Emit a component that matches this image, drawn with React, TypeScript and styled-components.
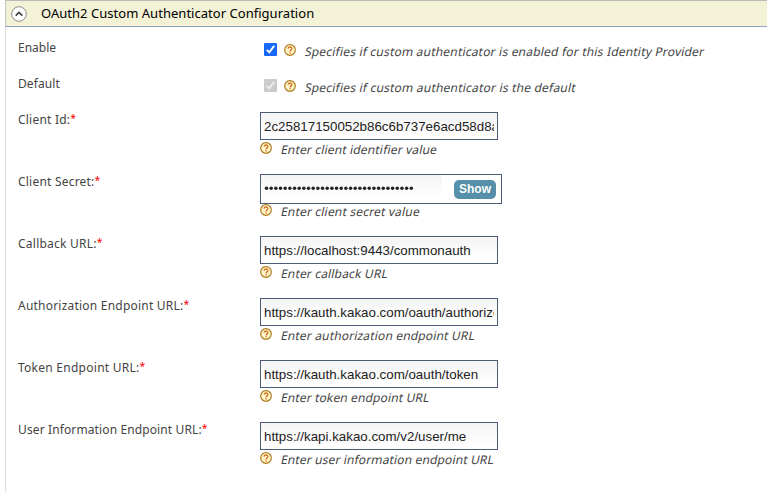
import React from "react";
import styled, { createGlobalStyle } from "styled-components";

const GlobalStyle = createGlobalStyle`
  * { box-sizing: border-box; }
  body {
    margin: 0;
    background: #fff;
    color: #444;
    font: 12px/16px "Noto Sans", "Open Sans", sans-serif;
    overflow: hidden;
  }
`;

const Panel = styled.section`
  height: 492px;
  margin-left: 5px;
  display: flex;
  flex-direction: column;
`;

const PanelHeader = styled.header`
  flex: none;
  height: 27px;
  display: flex;
  align-items: flex-start;
  gap: 14px;
  padding: 3px 0 0 5px;
  background: #f3f1d6;
  border-top: 1px solid #bbb;
  border-bottom: 1px solid #8fa3c4;
  border-left: 1px solid #c6c6c0;

  > svg { flex: none; margin-top: 2px; }
`;

const Title = styled.h2`
  margin: 0;
  font-size: 13px;
  line-height: 18px;
  font-weight: 400;
  letter-spacing: 0.03px;
  color: #000;
  white-space: nowrap;
`;

const PanelBody = styled.div`
  flex: 1;
  padding: 3px 0 0 12px;
  border-left: 1px solid #ddd;
`;

const Row = styled.div<{ $tall?: boolean }>`
  display: grid;
  grid-template-columns: 242px 1fr;
  height: ${(p) => (p.$tall ? 62 : 36)}px;
`;

const Label = styled.label<{ $tracking: number }>`
  padding-top: 10px;
  white-space: nowrap;
  letter-spacing: ${(p) => p.$tracking}px;
`;

const Required = styled.span`
  font-size: 10.5px;
  line-height: 1;
  vertical-align: 2px;
  color: #f00;
`;

const CheckLine = styled.div`
  display: flex;
  align-items: flex-start;
  padding: 13px 0 0 4px;
`;

const CheckBox = styled.span<{ $disabled?: boolean }>`
  display: block;
  width: 13px;
  height: 13px;
  border-radius: 1px;
  background: ${(p) => (p.$disabled ? "#cbcbcb" : "#1769f5")};
  color: ${(p) => (p.$disabled ? "#ececec" : "#fff")};
  margin-right: 7px;

  svg { display: block; }
`;

const Field = styled.div`
  padding-top: 10px;
`;

const InputSlot = styled.div`
  height: 30px;
`;

const TextInput = styled.input`
  display: block;
  width: 238px;
  height: 28px;
  padding: 1px 3px 0;
  border: 1px solid #4c5b77;
  border-radius: 0;
  outline: 0;
  color: #222;
  background: linear-gradient(#f4f4f4, #fff 90%);
  font: 13.333px "Liberation Sans", Arial, sans-serif;
`;

const SecretBox = styled.div`
  width: 242px;
  height: 30px;
  display: flex;
  align-items: flex-start;
  justify-content: space-between;
  padding: 0 5px 0 0;
  border: 1px solid #4c5b77;
`;

const SecretValue = styled.div`
  width: 181px;
  height: 26px;
  display: flex;
  align-items: center;
  padding: 0 0 0 3px;
  color: #222;
  background: linear-gradient(#f4f4f4, #fff 90%);

  svg { display: block; }
`;

const ShowButton = styled.button`
  width: 42px;
  height: 19px;
  margin-top: 5px;
  padding: 0 0 1px;
  border: 0;
  border-radius: 5px;
  color: #fff;
  background: #558fa9;
  font: bold 12px/18px "Liberation Sans", Arial, sans-serif;
`;

const HintLine = styled.div<{ $offset: number }>`
  display: flex;
  align-items: flex-start;
  gap: 8px;
  padding-top: ${(p) => p.$offset}px;

  > svg { flex: none; display: block; }
`;

const HintText = styled.span<{ $tracking: number }>`
  letter-spacing: ${(p) => p.$tracking}px;
  white-space: nowrap;
  transform: skewX(-12deg);
  transform-origin: 0 13px;
`;

const CollapseIcon = () => (
  <svg width="16" height="16" viewBox="0 0 16 16" fill="none">
    <circle cx="8" cy="8" r="7.3" fill="#fff" stroke="#8d8d8d" strokeWidth="1" />
    <path d="M4.7 9.6 8 6.4l3.3 3.2" stroke="#444" strokeWidth="1.8" />
  </svg>
);

const HelpIcon = () => (
  <svg width="12" height="12" viewBox="0 0 12 12" fill="none">
    <circle cx="6" cy="6" r="5.3" fill="#fff8cf" stroke="#ad7a1c" strokeWidth="1.2" />
    <path d="M4.1 4.8c0-2.4 3.8-2.3 3.8-.2C7.9 6 6.1 5.8 6.1 7.4" stroke="#d66c1b" strokeWidth="1.3" />
    <path d="M5.4 8.2h1.4v1.3H5.4z" fill="#d66c1b" />
  </svg>
);

const CheckMark = () => (
  <svg width="13" height="13" viewBox="0 0 13 13" fill="none">
    <path d="M2.8 6.9 5.3 9.3 10.2 2.9" stroke="currentColor" strokeWidth="1.9" />
  </svg>
);

const MaskDots = () => (
  <svg width="152" height="8" viewBox="0 0 152 8" fill="currentColor">
    {Array.from({ length: 32 }, (_, i) => (
      <circle key={i} cx={2.5 + i * 4.67} cy="4.2" r="1.75" />
    ))}
  </svg>
);

type Hinted = { text: string; tracking: number; offset?: number };

const Hint = ({ text, tracking, offset = 0 }: Hinted) => (
  <HintLine $offset={offset}>
    <HelpIcon />
    <HintText $tracking={tracking}>{text}</HintText>
  </HintLine>
);

const toggles = [
  { label: "Enable", lt: 0, hint: "Specifies if custom authenticator is enabled for this Identity Provider", ht: 0.2, disabled: false },
  { label: "Default", lt: 0.1, hint: "Specifies if custom authenticator is the default", ht: 0.21, disabled: true },
];

const fields = [
  { label: "Client Id:", lt: 0.22, value: "2c25817150052b86c6b737e6acd58d8a", hint: "Enter client identifier value", ht: 0.17 },
  { label: "Client Secret:", lt: 0.21, secret: true, hint: "Enter client secret value", ht: 0.19 },
  { label: "Callback URL:", lt: 0.24, value: "https://localhost:9443/commonauth", hint: "Enter callback URL", ht: 0.17 },
  { label: "Authorization Endpoint URL:", lt: 0.22, value: "https://kauth.kakao.com/oauth/authorize", hint: "Enter authorization endpoint URL", ht: 0.16 },
  { label: "Token Endpoint URL:", lt: 0.26, value: "https://kauth.kakao.com/oauth/token", hint: "Enter token endpoint URL", ht: 0.13 },
  { label: "User Information Endpoint URL:", lt: 0.12, value: "https://kapi.kakao.com/v2/user/me", hint: "Enter user information endpoint URL", ht: 0.14 },
];

export default function App() {
  return (
    <>
      <GlobalStyle />
      <Panel>
        <PanelHeader>
          <CollapseIcon />
          <Title>OAuth2 Custom Authenticator Configuration</Title>
        </PanelHeader>
        <PanelBody>
          {toggles.map((t) => (
            <Row key={t.label}>
              <Label $tracking={t.lt}>{t.label}</Label>
              <CheckLine>
                <CheckBox $disabled={t.disabled} role="checkbox" aria-checked="true" aria-disabled={t.disabled}>
                  <CheckMark />
                </CheckBox>
                <Hint text={t.hint} tracking={t.ht} offset={1} />
              </CheckLine>
            </Row>
          ))}
          {fields.map((f) => (
            <Row key={f.label} $tall>
              <Label $tracking={f.lt}>
                {f.label}
                <Required>*</Required>
              </Label>
              <Field>
                <InputSlot>
                  {f.secret ? (
                    <SecretBox>
                      <SecretValue><MaskDots /></SecretValue>
                      <ShowButton>Show</ShowButton>
                    </SecretBox>
                  ) : (
                    <TextInput defaultValue={f.value} />
                  )}
                </InputSlot>
                <Hint text={f.hint} tracking={f.ht} />
              </Field>
            </Row>
          ))}
        </PanelBody>
      </Panel>
    </>
  );
}
